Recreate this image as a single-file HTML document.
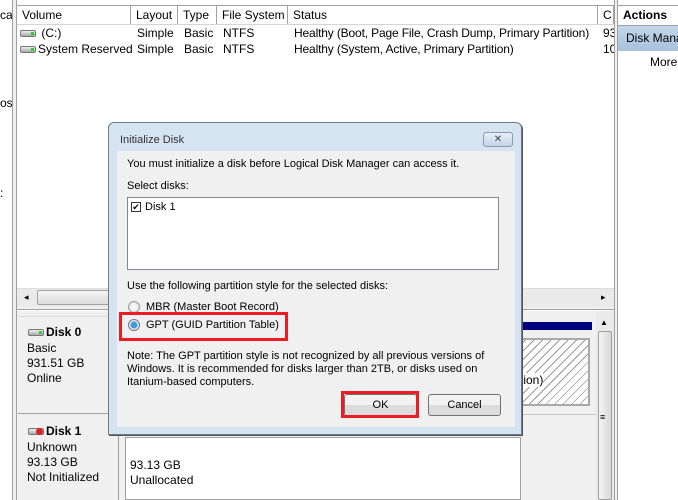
<!DOCTYPE html>
<html><head><style>
*{box-sizing:border-box;margin:0;padding:0}
body{width:678px;height:500px;position:relative;overflow:hidden;background:#fff;font-family:"Liberation Sans",sans-serif;font-size:12px;color:#000}
.a{position:absolute}
.t{position:absolute;white-space:nowrap;line-height:14px}
.d{font-size:11px}
.hd{position:absolute;top:6px;height:18px;border-right:1px solid #a0a0a0;padding:2px 0 0 5px;background:#fff}
.drv{display:inline-block;width:16px;height:7px;border:1px solid #777;border-radius:2px;background:linear-gradient(#eee,#aaa);position:relative;vertical-align:middle;margin-right:2px}
.drv:after{content:"";position:absolute;right:1px;top:1px;width:3px;height:3px;background:#3c3}
.btn{position:absolute;height:22px;border:1px solid #707070;border-radius:3px;background:linear-gradient(#f2f2f2 50%,#dcdcdc 50%);text-align:center;line-height:20px}
</style></head><body>
<div class="a" style="left:0;top:0;width:13px;height:500px;background:#fff"></div>
<div class="t" style="left:0;top:8px">cal</div>
<div class="t" style="left:0;top:96px">os</div>
<div class="t" style="left:0;top:186px">:</div>
<div class="a" style="left:12px;top:0;width:5px;height:500px;background:#f0f0f0;border-left:1px solid #a0a0a0;border-right:1px solid #a0a0a0"></div>
<div class="a" style="left:17px;top:5px;width:597px;height:1px;background:#a0a0a0"></div>
<div class="hd" style="left:17px;width:114px">Volume</div>
<div class="hd" style="left:131px;width:47px">Layout</div>
<div class="hd" style="left:178px;width:39px">Type</div>
<div class="hd" style="left:217px;width:71px">File System</div>
<div class="hd" style="left:288px;width:310px">Status</div>
<div class="hd" style="left:598px;width:16px">C</div>
<div class="a" style="left:17px;top:24px;width:597px;height:1px;background:#d5d5d5"></div>
<div class="t" style="left:20px;top:26px"><span class="drv"></span> (C:)</div>
<div class="t" style="left:20px;top:42px"><span class="drv"></span>System Reserved</div>
<div class="t" style="left:137px;top:26px">Simple</div><div class="t" style="left:137px;top:42px">Simple</div>
<div class="t" style="left:184px;top:26px">Basic</div><div class="t" style="left:184px;top:42px">Basic</div>
<div class="t" style="left:223px;top:26px">NTFS</div><div class="t" style="left:223px;top:42px">NTFS</div>
<div class="t" style="left:294px;top:26px;letter-spacing:-0.15px">Healthy (Boot, Page File, Crash Dump, Primary Partition)</div>
<div class="t" style="left:294px;top:42px;letter-spacing:-0.15px">Healthy (System, Active, Primary Partition)</div>
<div class="t" style="left:603px;top:26px;width:11px;overflow:hidden">93</div>
<div class="t" style="left:603px;top:42px;width:11px;overflow:hidden">10</div>
<div class="a" style="left:17px;top:288px;width:597px;height:19px;background:#eaeaea;border-top:1px solid #ddd"></div>
<div class="a" style="left:37px;top:290px;width:80px;height:15px;border:1px solid #a0a0a0;border-radius:2px;background:linear-gradient(#f4f4f4,#dcdcdc)"></div>
<div class="t" style="left:24px;top:290px;font-size:9px">◂</div>
<div class="t" style="left:601px;top:290px;font-size:9px">▸</div>
<div class="a" style="left:17px;top:307px;width:597px;height:3px;background:#f0f0f0;border-bottom:1px solid #a0a0a0"></div>
<div class="a" style="left:614px;top:0;width:4px;height:500px;background:#f0f0f0;border-left:1px solid #a0a0a0;border-right:1px solid #a0a0a0"></div>
<div class="a" style="left:618px;top:5px;width:60px;height:1px;background:#a0a0a0"></div>
<div class="t" style="left:623px;top:8px;font-weight:bold">Actions</div>
<div class="a" style="left:618px;top:25px;width:60px;height:1px;background:#a0a0a0"></div>
<div class="a" style="left:618px;top:26px;width:60px;height:25px;background:linear-gradient(#c4d6ea,#a9c1dd)"></div>
<div class="t" style="left:626px;top:31px">Disk Mana</div>
<div class="t" style="left:650px;top:55px">More</div>
<div class="a" style="left:17px;top:311px;width:580px;height:189px;background:#f0f0f0"></div>
<div class="a" style="left:18px;top:316px;width:100px;height:98px;background:#f0f0f0;border-bottom:1px solid #a0a0a0;border-top:1px solid #ddd"></div>
<div class="t" style="left:28px;top:325px;font-weight:bold"><span class="drv"></span>Disk 0</div>
<div class="t" style="left:27px;top:341px">Basic</div>
<div class="t" style="left:27px;top:356px">931.51 GB</div>
<div class="t" style="left:27px;top:371px">Online</div>
<div class="t" style="left:28px;top:424px;font-weight:bold"><span class="drv"></span>Disk 1</div>
<div class="a" style="left:36px;top:428px;width:7px;height:7px;border-radius:50%;background:#d22"></div>
<div class="t" style="left:27px;top:440px">Unknown</div>
<div class="t" style="left:27px;top:455px">93.13 GB</div>
<div class="t" style="left:27px;top:470px">Not Initialized</div>
<div class="a" style="left:118px;top:415px;width:1px;height:85px;background:#a0a0a0"></div>
<div class="a" style="left:125px;top:437px;width:396px;height:63px;background:#fff;border:1px solid #a0a0a0"></div>
<div class="t" style="left:130px;top:458px">93.13 GB</div>
<div class="t" style="left:130px;top:473px">Unallocated</div>
<div class="a" style="left:510px;top:322px;width:82px;height:8px;background:#000080"></div>
<div class="a" style="left:510px;top:338px;width:80px;height:68px;border:2px solid #a8a8a8;background:repeating-linear-gradient(-45deg,#fff 0 5px,#999 5px 6px)"></div>
<div class="t" style="left:520px;top:373px;background:#fff">tion)</div>
<div class="a" style="left:510px;top:414px;width:87px;height:1px;background:#c8c8c8"></div>
<div class="a" style="left:596px;top:311px;width:18px;height:189px;background:#eaeaea"></div>
<div class="a" style="left:598px;top:331px;width:14px;height:169px;border:1px solid #a0a0a0;border-radius:2px;background:linear-gradient(90deg,#f4f4f4,#d8d8d8)"></div>
<div class="t" style="left:600px;top:316px;font-size:8px">▲</div>
<div class="t" style="left:600px;top:410px;font-size:9px">≡</div>
<div class="a" style="left:108px;top:122px;width:414px;height:313px;background:#d6e3f1;border:1px solid #6a7b8e;border-radius:6px 6px 0 0;box-shadow:1px 1px 0 #555"></div>
<div class="t d" style="left:120px;top:133px;color:#333">Initialize Disk</div>
<div class="a" style="left:483px;top:132px;width:30px;height:15px;border:1px solid #8a9bb0;border-radius:3px;background:linear-gradient(#e6eef8,#c6d4e6);text-align:center;font-size:10px;line-height:13px;color:#444">✕</div>
<div class="a" style="left:117px;top:151px;width:398px;height:276px;background:#f0f0f0"></div>
<div class="t d" style="left:127px;top:157px">You must initialize a disk before Logical Disk Manager can access it.</div>
<div class="t d" style="left:127px;top:179px">Select disks:</div>
<div class="a" style="left:127px;top:197px;width:372px;height:73px;background:#fff;border:1px solid #828790"></div>
<div class="a" style="left:131px;top:202px;width:10px;height:10px;border:1px solid #333;background:#fff;font-size:9px;line-height:8px;text-align:center">✔</div>
<div class="t d" style="left:145px;top:200px">Disk 1</div>
<div class="t d" style="left:127px;top:279px">Use the following partition style for the selected disks:</div>
<div class="a" style="left:128px;top:301px;width:12px;height:12px;border-radius:50%;border:1px solid #999;background:radial-gradient(#fff,#ddd)"></div>
<div class="t d" style="left:146px;top:300px">MBR (Master Boot Record)</div>
<div class="a" style="left:128px;top:319px;width:12px;height:12px;border-radius:50%;border:1px solid #777;background:radial-gradient(#3a9be6 0 3px,#eee 4px)"></div>
<div class="t d" style="left:146px;top:318px">GPT (GUID Partition Table)</div>
<div class="a" style="left:119px;top:312px;width:169px;height:29px;border:3px solid #ed1c24"></div>
<div class="t d" style="left:127px;top:349px">Note: The GPT partition style is not recognized by all previous versions of</div>
<div class="t d" style="left:127px;top:362px">Windows. It is recommended for disks larger than 2TB, or disks used on</div>
<div class="t d" style="left:127px;top:375px">Itanium-based computers.</div>
<div class="btn d" style="left:344px;top:394px;width:73px">OK</div>
<div class="a" style="left:341px;top:391px;width:78px;height:27px;border:3px solid #ed1c24"></div>
<div class="btn d" style="left:428px;top:394px;width:73px">Cancel</div>
</body></html>
